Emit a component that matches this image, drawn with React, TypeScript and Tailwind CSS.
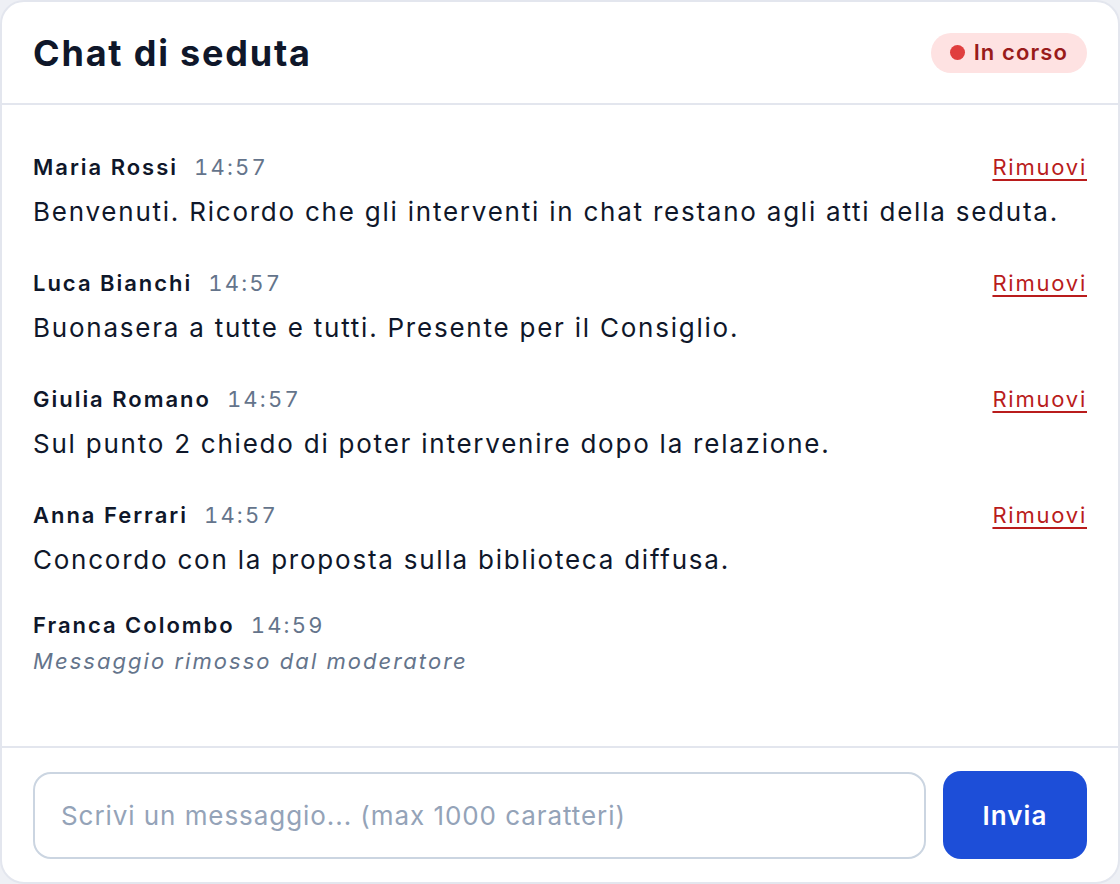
import React, { useState } from "react";

type Message = {
  id: number;
  author: string;
  time: string;
  text: string;
  removed?: boolean;
};

const messages: Message[] = [
  { id: 1, author: "Maria Rossi", time: "14:57", text: "Benvenuti. Ricordo che gli interventi in chat restano agli atti della seduta." },
  { id: 2, author: "Luca Bianchi", time: "14:57", text: "Buonasera a tutte e tutti. Presente per il Consiglio." },
  { id: 3, author: "Giulia Romano", time: "14:57", text: "Sul punto 2 chiedo di poter intervenire dopo la relazione." },
  { id: 4, author: "Anna Ferrari", time: "14:57", text: "Concordo con la proposta sulla biblioteca diffusa." },
  { id: 5, author: "Franca Colombo", time: "14:59", text: "", removed: true },
];

const App: React.FC = () => {
  const [draft, setDraft] = useState<string>("");

  return (
    <div className="min-h-screen bg-[#eef0f5] font-['Inter',sans-serif]">
      <div className="w-[1120px] h-[884px] flex flex-col bg-white border-2 border-[#e3e6ee] rounded-[24px] overflow-hidden">
        {/* header */}
        <div className="h-[103px] flex items-center justify-between px-[31px] border-b-2 border-[#e3e6ee]">
          <h1 className="text-[36px] font-bold text-[#0f172a] tracking-[0.05em]">Chat di seduta</h1>
          <span className="flex items-center gap-[9px] h-[40px] px-[19px] rounded-full bg-[#fee2e2] text-[#991b1b] text-[22px] font-semibold tracking-[0.05em]">
            <span className="w-[15px] h-[15px] rounded-full bg-[#e03e3e]" />
            In corso
          </span>
        </div>

        {/* messages */}
        <div className="flex-1 flex flex-col gap-[36px] px-[31px] pt-[46px]">
          {messages.map((m) => (
            <div key={m.id} className={m.removed ? "flex flex-col gap-[3px] -mt-[6px]" : "flex flex-col gap-[8px]"}>
              <div className="flex items-center justify-between h-[33px]">
                <div className="flex items-baseline gap-[16px] text-[22px]">
                  <span className="font-semibold text-[#0f172a] tracking-[0.09em]">{m.author}</span>
                  <span className="text-[#64748b] tabular-nums tracking-[0.1em]">{m.time}</span>
                </div>
                {!m.removed && (
                  <button className="text-[22px] text-[#b91c1c] underline underline-offset-[4px] tracking-[0.08em]">Rimuovi</button>
                )}
              </div>
              {m.removed ? (
                <p className="text-[22px] italic text-[#64748b] leading-[33px] tracking-[0.093em]">Messaggio rimosso dal moderatore</p>
              ) : (
                <p className="text-[26px] text-[#0f172a] leading-[39px] tracking-[0.068em]">{m.text}</p>
              )}
            </div>
          ))}
        </div>

        {/* footer */}
        <div className="flex items-center gap-[17px] px-[31px] h-[136px] border-t-2 border-[#e3e6ee]">
          <input
            value={draft}
            onChange={(e) => setDraft(e.target.value)}
            placeholder="Scrivi un messaggio... (max 1000 caratteri)"
            className="flex-1 h-[87px] px-[26px] rounded-[18px] border-2 border-[#cbd5e1] text-[26px] tracking-[0.036em] text-[#0f172a] placeholder:text-[#94a3b8] outline-none"
          />
          <button className="w-[144px] h-[88px] rounded-[18px] bg-[#1d4ed8] text-white text-[26px] font-semibold tracking-[0.04em]">
            Invia
          </button>
        </div>
      </div>
    </div>
  );
};

export default App;
